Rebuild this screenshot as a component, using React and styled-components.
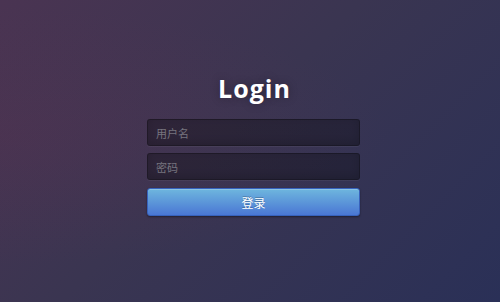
import React from 'react';
import styled, { createGlobalStyle } from 'styled-components';

const GlobalStyle = createGlobalStyle`
  html, body {
    margin: 0;
    padding: 0;
    width: 100%;
    height: 100%;
  }
  body {
    font-family: 'Open Sans', 'Noto Sans CJK SC', sans-serif;
  }
  * {
    box-sizing: border-box;
  }
`;

const App = () => {
  return (
    <Page>
      <GlobalStyle />
      <LoginBox>
        <Title>Login</Title>
        <Field type="text" placeholder="用户名" />
        <Field type="password" placeholder="密码" />
        <Submit type="button">登录</Submit>
      </LoginBox>
    </Page>
  );
};

const Page = styled.div`
  width: 500px;
  height: 302px;
  display: flex;
  justify-content: center;
  align-items: flex-start;
  padding: 73px 0 0 7px;
  background:
    radial-gradient(ellipse at 0% 45%, rgba(90, 50, 80, 0.3) 0%, rgba(90, 50, 80, 0) 55%),
    linear-gradient(135deg, #4a3452 0%, #3a3551 45%, #2a3057 100%);
  overflow: hidden;
`;

const LoginBox = styled.div`
  width: 213px;
  display: flex;
  flex-direction: column;
  gap: 7px;
`;

const Title = styled.h1`
  margin: 0 0 9px 2px;
  color: #fff;
  font-family: 'Open Sans', sans-serif;
  font-weight: 700;
  font-size: 25px;
  line-height: 30px;
  letter-spacing: 1px;
  text-align: center;
  text-shadow: 0 0 10px rgba(0, 0, 0, 0.3);
`;

const Field = styled.input`
  width: 100%;
  height: 27px;
  padding: 0 8px;
  border: 1px solid rgba(0, 0, 0, 0.3);
  border-radius: 3px;
  background: rgba(0, 0, 0, 0.3);
  box-shadow:
    inset 0 -3px 10px rgba(0, 0, 0, 0.15),
    0 1px 1px rgba(255, 255, 255, 0.06);
  color: #fff;
  font-family: 'Noto Sans CJK SC', sans-serif;
  font-size: 11px;
  outline: none;

  &::placeholder {
    color: #77747f;
  }
`;

const Submit = styled.button`
  width: 100%;
  height: 28px;
  margin-top: 1px;
  border: 1px solid #3762bc;
  border-radius: 3px;
  background: linear-gradient(to bottom, #6eb6de, #4a77d4);
  box-shadow: inset 0 1px 0 rgba(255, 255, 255, 0.2), 0 1px 2px rgba(0, 0, 0, 0.4);
  color: #fff;
  font-family: 'Noto Sans CJK SC', sans-serif;
  font-size: 12px;
  text-shadow: 0 -1px 0 rgba(0, 0, 0, 0.25);
  cursor: pointer;
`;

export default App;
